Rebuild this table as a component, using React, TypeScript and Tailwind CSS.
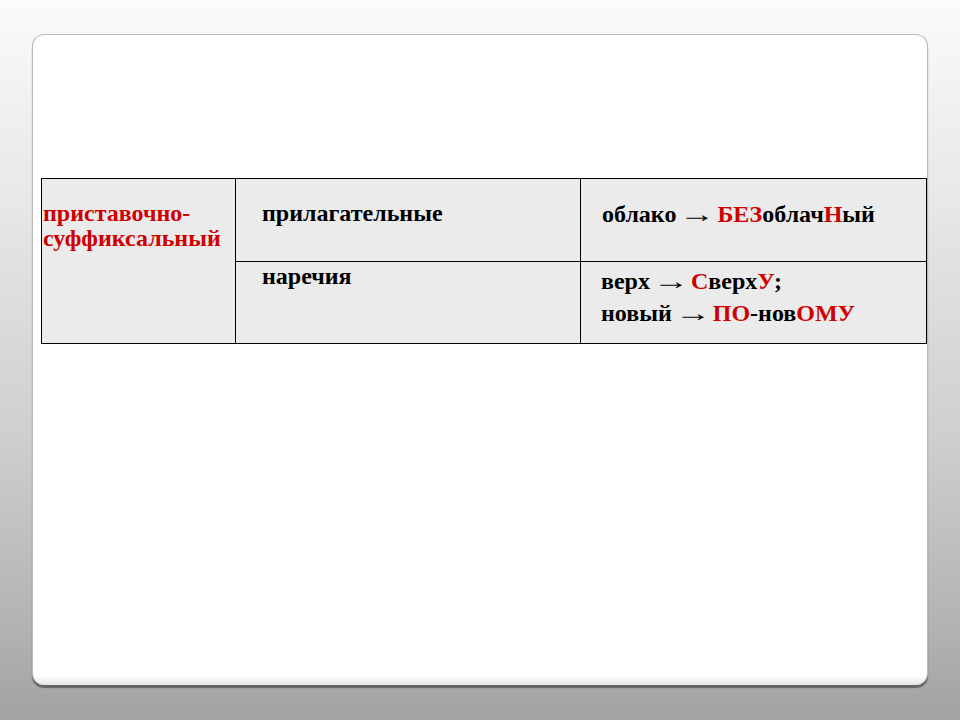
const Arrow = () => (
  <span className="inline-block ml-[9px] mr-[8px] font-normal scale-x-[1.5]">→</span>
)

export default function App() {
  return (
    <div
      className="w-full h-[720px] overflow-hidden bg-[linear-gradient(180deg,#fbfbfb_0%,#e6e6e6_30%,#cfcfcf_60%,#b5b5b5_85%,#a2a2a2_100%)] pt-[34px] pl-[32px]"
      style={{ fontFamily: '"Liberation Serif", "Times New Roman", serif' }}
    >
      <div className="w-[896px] h-[651px] rounded-[12px] border border-[#b8b8b8] border-b-0 bg-[linear-gradient(180deg,#ffffff_0%,#ffffff_98.6%,#e4e4e4_100%)] shadow-[0_3px_1px_rgba(70,70,70,0.7)] pt-[143px] pl-[8px]">
        <div className="grid grid-cols-[193px_344px_345px] grid-rows-[82px_81px] gap-px bg-black p-px w-[886px] text-[24px] leading-[25px] font-bold text-black">
          <div className="row-span-2 bg-[#ebebeb] pt-[22px] pl-[1px] text-[#d00000]">
            приставочно-
            <br />
            суффиксальный
          </div>
          <div className="bg-[#ebebeb] pt-[22px] pl-[26px]">прилагательные</div>
          <div className="bg-[#ebebeb] pt-[23px] pl-[21px]">
            облако<Arrow /><span className="text-[#d00000]">БЕЗ</span>облач<span className="text-[#d00000]">Н</span>ый
          </div>
          <div className="bg-[#ebebeb] pt-[2px] pl-[26px]">наречия</div>
          <div className="bg-[#ebebeb] pt-[7px] pl-[20px]">
            <p>
              верх<Arrow /><span className="text-[#d00000]">С</span>верх<span className="text-[#d00000]">У</span>;
            </p>
            <p className="mt-[7px]">
              новый<Arrow /><span className="text-[#d00000]">ПО</span>-нов<span className="text-[#d00000]">ОМУ</span>
            </p>
          </div>
        </div>
      </div>
    </div>
  )
}
